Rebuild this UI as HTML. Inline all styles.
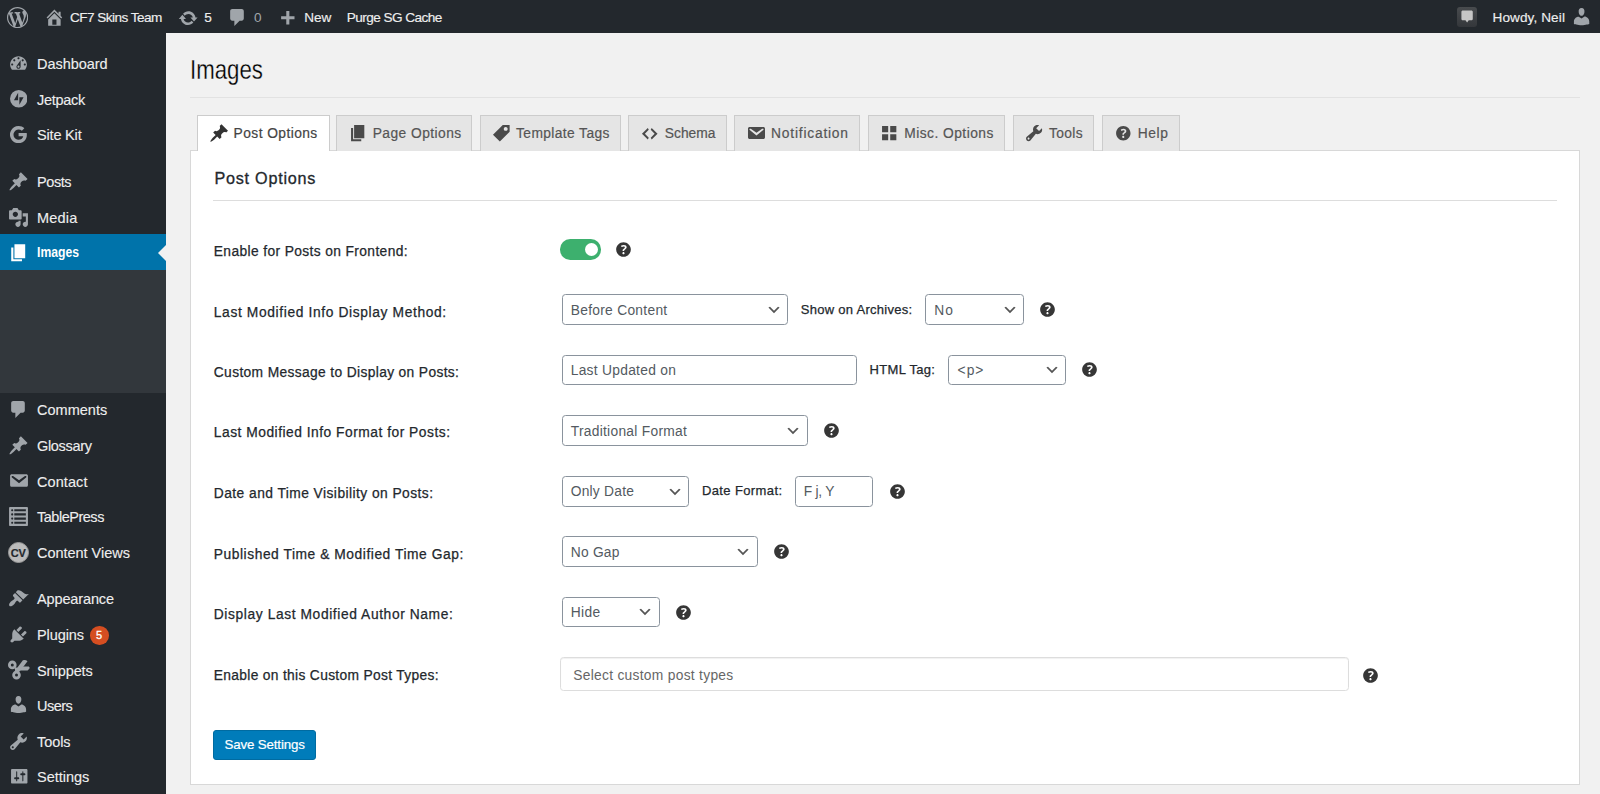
<!DOCTYPE html>
<html lang="en"><head><meta charset="utf-8"><title>Images</title>
<style>
*{box-sizing:border-box;margin:0;padding:0}
html,body{width:1600px;height:794px;overflow:hidden;background:#f1f1f1;font-family:"Liberation Sans",sans-serif;color:#23282d}
.t{position:absolute;white-space:pre;display:block}
.i{position:absolute;display:block}
.b{position:absolute;display:block}
#bar{position:absolute;left:0;top:0;width:1600px;height:33px;background:#23282d}
#side{position:absolute;left:0;top:33px;width:166px;height:761px;background:#23282d}
.tab{position:absolute;top:115px;height:36px;background:#e5e5e5;border:1px solid #ccc;border-bottom:none}
.tab.on{background:#fff;height:36px;border-color:#ccc}
.sel,.inp{position:absolute;background:#fff;border:1px solid #8a939d;border-radius:3.5px}
</style></head><body>
<div id="bar"></div>
<svg class="i" style="left:7.20px;top:6.80px" width="21.2" height="21.20" viewBox="0 0 20 20" fill="#a0a5aa" ><path d="M20 10c0-5.51-4.49-10-10-10C4.48 0 0 4.49 0 10c0 5.52 4.48 10 10 10 5.51 0 10-4.48 10-10zM7.78 15.37L4.37 6.22c.55-.02 1.17-.08 1.17-.08.5-.06.44-1.13-.06-1.11 0 0-1.45.11-2.37.11-.18 0-.37 0-.58-.01C4.12 2.69 6.87 1.11 10 1.11c2.33 0 4.45.87 6.05 2.34-.68-.11-1.65.39-1.65 1.58 0 .74.45 1.36.9 2.1.35.61.55 1.36.55 2.46 0 1.49-1.4 5-1.4 5l-3.03-8.37c.54-.02.82-.17.82-.17.5-.05.44-1.25-.06-1.22 0 0-1.44.12-2.38.12-.87 0-2.33-.12-2.33-.12-.5-.03-.56 1.2-.06 1.22l.92.08 1.26 3.41zM17.41 10c.24-.64.74-1.87.43-4.25.7 1.29 1.05 2.71 1.05 4.25 0 3.29-1.73 6.24-4.4 7.78.97-2.59 1.94-5.2 2.92-7.78zM6.1 18.09C3.12 16.65 1.11 13.53 1.11 10c0-1.3.23-2.48.72-3.59C3.25 10.3 4.67 14.2 6.1 18.09zm4.03-6.63l2.58 6.98c-.86.29-1.76.45-2.71.45-.79 0-1.57-.11-2.29-.33.81-2.38 1.62-4.74 2.42-7.1z"/></svg>
<svg class="i" style="left:43.50px;top:6.79px" width="20.8" height="20.80" viewBox="0 0 20 20" fill="#a0a5aa" ><path d="M16 8.5l1.53 1.53-1.06 1.06L10 4.62l-6.47 6.47-1.06-1.06L10 2.5l4 4v-2h2v4zm-6-2.46l6 5.99V18H4v-5.97zM12 17v-5H8v5h4z"/></svg>
<span class="t" style="left:69.90px;top:8px;font-size:13.6px;line-height:20px;color:#eee;letter-spacing:-0.542px;-webkit-text-stroke:0.15px #eee;">CF7 Skins Team</span>
<svg class="i" style="left:177.50px;top:7.60px" width="20.4" height="20.40" viewBox="0 0 20 20" fill="#a0a5aa" ><path d="M10.2 3.28c3.53 0 6.43 2.61 6.92 6h2.08l-3.5 4-3.5-4h2.32c-.45-1.97-2.21-3.45-4.32-3.45-1.45 0-2.73.71-3.54 1.78L4.95 5.66C6.23 4.2 8.11 3.28 10.2 3.28zm-.4 13.44c-3.52 0-6.43-2.61-6.92-6H.8l3.5-4c1.17 1.33 2.33 2.67 3.5 4H5.48c.45 1.97 2.21 3.45 4.32 3.45 1.45 0 2.73-.71 3.54-1.78l1.71 1.95c-1.28 1.46-3.15 2.38-5.25 2.38z"/></svg>
<span class="t" style="left:204.30px;top:8px;font-size:13.6px;line-height:20px;color:#eee;letter-spacing:-0.062px;-webkit-text-stroke:0.15px #eee;">5</span>
<svg class="i" style="left:227.12px;top:7.30px" width="21" height="21.00" viewBox="0 0 20 20" fill="#a0a5aa" ><path d="M5 2h9c1.1 0 2 .9 2 2v7c0 1.1-.9 2-2 2h-2l-5 5v-5H5c-1.1 0-2-.9-2-2V4c0-1.1.9-2 2-2z"/></svg>
<span class="t" style="left:254.00px;top:8px;font-size:13.6px;line-height:20px;color:#a0a5aa;letter-spacing:0.338px;">0</span>
<svg class="i" style="left:277.24px;top:8.64px" width="20.6" height="20.60" viewBox="0 0 20 20" fill="#a0a5aa" ><path d="M17 7v3h-5v5H9v-5H4V7h5V2h3v5h5z"/></svg>
<span class="t" style="left:304.30px;top:8px;font-size:13.6px;line-height:20px;color:#eee;letter-spacing:-0.101px;-webkit-text-stroke:0.15px #eee;">New</span>
<span class="t" style="left:346.70px;top:8px;font-size:13.6px;line-height:20px;color:#eee;letter-spacing:-0.540px;-webkit-text-stroke:0.15px #eee;">Purge SG Cache</span>
<div class="b" style="left:1456.5px;top:7px;width:20.500px;height:20.200px;background:linear-gradient(#484b4e,#34373b);border-radius:3px"></div>
<svg class="i" style="left:1459.90px;top:8.65px" width="14.2" height="14.20" viewBox="0 0 20 20" fill="#c6c6c6" ><path d="M4 2h12c1.100 0 2 .9 2 2v10c0 1.100-.9 2-2 2h-3.700L10 19l-2.300-3H4c-1.100 0-2-.9-2-2V4c0-1.100.9-2 2-2z"/></svg>
<span class="t" style="left:1492.50px;top:8px;font-size:13.6px;line-height:20px;color:#eee;letter-spacing:0.089px;-webkit-text-stroke:0.15px #eee;">Howdy, Neil</span>
<svg class="i" style="left:1571.05px;top:6.47px" width="21.2" height="21.20" viewBox="0 0 20 20" fill="#a0a5aa" ><path d="M10 9.25c-2.27 0-2.73-3.44-2.73-3.44C7 4.02 7.82 2 9.97 2c2.16 0 2.98 2.02 2.71 3.81 0 0-.41 3.44-2.68 3.44zm0 2.57L12.720 10c2.39 0 4.52 2.33 4.52 4.53v2.49s-3.65 1.13-7.24 1.13c-3.65 0-7.24-1.13-7.24-1.13v-2.49c0-2.25 1.94-4.48 4.47-4.48z"/></svg>
<div id="side"></div>
<div class="b" style="left:0;top:270px;width:166px;height:123px;background:#32373c"></div>
<div class="b" style="left:0;top:234px;width:166px;height:36px;background:#0073aa"></div>
<div class="b" style="left:158px;top:244.500px;width:0;height:0;border:8px solid transparent;border-right-color:#f1f1f1;border-left-width:0"></div>
<span class="t" style="left:37.00px;top:54px;font-size:14.5px;line-height:20px;color:#eee;letter-spacing:-0.049px;-webkit-text-stroke:0.12px #eee;">Dashboard</span>
<svg class="i" style="left:8.15px;top:52.77px" width="21" height="21.00" viewBox="0 0 20 20" fill="#a0a5aa" ><path d="M3.76 16h12.480c1.1-1.37 1.76-3.11 1.76-5 0-4.42-3.58-8-8-8s-8 3.58-8 8c0 1.89.66 3.63 1.76 5zM10 4c.55 0 1 .45 1 1s-.45 1-1 1-1-.45-1-1 .45-1 1-1zM6 6c.55 0 1 .45 1 1s-.45 1-1 1-1-.45-1-1 .45-1 1-1zm8 0c.55 0 1 .45 1 1s-.45 1-1 1-1-.45-1-1 .45-1 1-1zm-5.370 5.550L12 7v6c0 1.1-.9 2-2 2s-2-.9-2-2c0-.57.24-1.08.63-1.45zM4 10c.55 0 1 .45 1 1s-.45 1-1 1-1-.45-1-1 .45-1 1-1zm12 0c.55 0 1 .45 1 1s-.45 1-1 1-1-.45-1-1 .45-1 1-1zm-5 3c0-.55-.45-1-1-1s-1 .45-1 1 .45 1 1 1 1-.45 1-1z"/></svg>
<span class="t" style="left:37.00px;top:90px;font-size:14.5px;line-height:20px;color:#eee;letter-spacing:-0.283px;-webkit-text-stroke:0.12px #eee;">Jetpack</span>
<span class="t" style="left:37.00px;top:125px;font-size:14.5px;line-height:20px;color:#eee;letter-spacing:-0.180px;-webkit-text-stroke:0.12px #eee;">Site Kit</span>
<span class="t" style="left:37.00px;top:172px;font-size:14.5px;line-height:20px;color:#eee;letter-spacing:-0.413px;-webkit-text-stroke:0.12px #eee;">Posts</span>
<svg class="i" style="left:8.20px;top:170.79px" width="21" height="21.00" viewBox="0 0 20 20" fill="#a0a5aa" ><path d="M10.44 3.02l1.82-1.82 6.36 6.35-1.83 1.82c-1.05-.68-2.48-.57-3.41.36l-.75.75c-.92.93-1.04 2.35-.35 3.41l-1.83 1.82-2.41-2.41-2.8 2.79c-.42.42-3.38 2.71-3.8 2.29s1.86-3.39 2.28-3.81l2.79-2.79L4.1 9.36l1.830-1.820c1.05.69 2.48.57 3.4-.36l.75-.75c.93-.92 1.05-2.35.36-3.41z"/></svg>
<span class="t" style="left:37.00px;top:208px;font-size:14.5px;line-height:20px;color:#eee;letter-spacing:0.200px;-webkit-text-stroke:0.12px #eee;">Media</span>
<svg class="i" style="left:8.25px;top:206.80px" width="21" height="21.00" viewBox="0 0 20 20" fill="#a0a5aa" ><path d="M13 11V4c0-.55-.45-1-1-1h-1.670L9 1H5L3.670 3H2c-.55 0-1 .45-1 1v7c0 .55.45 1 1 1h10c.55 0 1-.45 1-1zM7 4.500c1.38 0 2.5 1.12 2.5 2.5S8.380 9.500 7 9.500 4.500 8.380 4.500 7 5.620 4.500 7 4.500zM14 6h5v10.500c0 1.38-1.12 2.5-2.5 2.5S14 17.880 14 16.500s1.120-2.500 2.500-2.500c.17 0 .34.02.5.05V9h-3V6zm-4 8.050V13h2v3.500c0 1.38-1.12 2.5-2.500 2.500S7 17.880 7 16.500 8.120 14 9.500 14c.17 0 .34.02.5.05z"/></svg>
<span class="t" style="left:37.00px;top:400px;font-size:14.5px;line-height:20px;color:#eee;letter-spacing:0.011px;-webkit-text-stroke:0.12px #eee;">Comments</span>
<svg class="i" style="left:8.17px;top:398.80px" width="21" height="21.00" viewBox="0 0 20 20" fill="#a0a5aa" ><path d="M5 2h9c1.1 0 2 .9 2 2v7c0 1.1-.9 2-2 2h-2l-5 5v-5H5c-1.1 0-2-.9-2-2V4c0-1.1.9-2 2-2z"/></svg>
<span class="t" style="left:37.00px;top:436px;font-size:14.5px;line-height:20px;color:#eee;letter-spacing:-0.315px;-webkit-text-stroke:0.12px #eee;">Glossary</span>
<svg class="i" style="left:8.20px;top:435.49px" width="21" height="21.00" viewBox="0 0 20 20" fill="#a0a5aa" ><path d="M10.44 3.02l1.82-1.82 6.36 6.35-1.83 1.82c-1.05-.68-2.48-.57-3.41.36l-.75.75c-.92.93-1.04 2.35-.35 3.41l-1.83 1.82-2.41-2.41-2.8 2.79c-.42.42-3.38 2.71-3.8 2.29s1.86-3.39 2.28-3.81l2.79-2.79L4.1 9.36l1.830-1.820c1.05.69 2.48.57 3.4-.36l.75-.75c.93-.92 1.05-2.35.36-3.41z"/></svg>
<span class="t" style="left:37.00px;top:472px;font-size:14.5px;line-height:20px;color:#eee;letter-spacing:0.074px;-webkit-text-stroke:0.12px #eee;">Contact</span>
<svg class="i" style="left:8.03px;top:469.95px" width="21" height="21.00" viewBox="0 0 20 20" fill="#a0a5aa" ><path d="M3.870 4h13.250C18.370 4 19 4.590 19 5.790v8.420c0 1.190-.63 1.790-1.880 1.790H3.870c-1.250 0-1.880-.6-1.880-1.790V5.790c0-1.200.63-1.790 1.880-1.790zm6.620 8.600l6.740-5.530c.24-.2.43-.66.130-1.070-.29-.41-.82-.42-1.170-.17l-5.700 3.860L4.800 5.830c-.35-.25-.88-.24-1.170.17-.3.41-.11.87.13 1.070z"/></svg>
<span class="t" style="left:37.00px;top:507px;font-size:14.5px;line-height:20px;color:#eee;letter-spacing:-0.483px;-webkit-text-stroke:0.12px #eee;">TablePress</span>
<svg class="i" style="left:8.10px;top:505.90px" width="21" height="21.00" viewBox="0 0 20 20" fill="#a0a5aa" ><path d="M2 19h16c.55 0 1-.45 1-1V2c0-.55-.45-1-1-1H2c-.55 0-1 .45-1 1v16c0 .55.45 1 1 1zM4 3c.55 0 1 .45 1 1s-.45 1-1 1-1-.45-1-1 .45-1 1-1zm13 0v2H6V3h11zM4 7c.55 0 1 .45 1 1s-.45 1-1 1-1-.45-1-1 .45-1 1-1zm13 0v2H6V7h11zM4 11c.55 0 1 .45 1 1s-.45 1-1 1-1-.45-1-1 .45-1 1-1zm13 0v2H6v-2h11zM4 15c.55 0 1 .45 1 1s-.45 1-1 1-1-.45-1-1 .45-1 1-1zm13 0v2H6v-2h11z"/></svg>
<span class="t" style="left:37.00px;top:543px;font-size:14.5px;line-height:20px;color:#eee;letter-spacing:-0.026px;-webkit-text-stroke:0.12px #eee;">Content Views</span>
<span class="t" style="left:37.00px;top:589px;font-size:14.5px;line-height:20px;color:#eee;letter-spacing:-0.130px;-webkit-text-stroke:0.12px #eee;">Appearance</span>
<svg class="i" style="left:7.84px;top:588.01px" width="21" height="21.00" viewBox="0 0 20 20" fill="#a0a5aa" ><path d="M14.480 11.060L7.410 3.990l1.500-1.500c.5-.56 2.300-.47 3.510.32 1.210.8 1.430 1.280 2.910 2.100 1.180.64 2.450 1.260 4.450.85zm-.71.71L6.700 4.700 4.930 6.470c-.39.39-.39 1.020 0 1.410l1.060 1.060c.39.39.39 1.030 0 1.420-.6.6-1.430 1.110-2.210 1.690-.35.26-.7.53-1.010.84C1.430 14.230.4 16.080 1.400 17.070c.99 1 2.840-.03 4.180-1.360.31-.31.58-.66.850-1.020.57-.78 1.080-1.610 1.690-2.210.39-.39 1.020-.39 1.410 0l1.060 1.060c.39.39 1.020.39 1.410 0z"/></svg>
<span class="t" style="left:37.00px;top:625px;font-size:14.5px;line-height:20px;color:#eee;letter-spacing:-0.095px;-webkit-text-stroke:0.12px #eee;">Plugins</span>
<svg class="i" style="left:8.00px;top:623.60px" width="21" height="21.00" viewBox="0 0 20 20" fill="#a0a5aa" ><path d="M13.110 4.360L9.870 7.600 8 5.730l3.240-3.240c.35-.34 1.050-.2 1.560.32.52.51.66 1.210.31 1.550zm-8 1.770l.91-1.120 9.010 9.010-1.190.84c-.71.71-2.630 1.160-3.820 1.160H6.140L4.900 17.260c-.59.59-1.540.59-2.120 0-.59-.58-.59-1.530 0-2.120l1.240-1.240v-3.880c0-1.130.4-3.190 1.090-3.890zm7.260 3.970l3.240-3.240c.34-.35 1.040-.21 1.550.31.52.51.66 1.210.31 1.550l-3.240 3.250z"/></svg>
<span class="t" style="left:37.00px;top:661px;font-size:14.5px;line-height:20px;color:#eee;letter-spacing:-0.092px;-webkit-text-stroke:0.12px #eee;">Snippets</span>
<span class="t" style="left:37.00px;top:696px;font-size:14.5px;line-height:20px;color:#eee;letter-spacing:-0.515px;-webkit-text-stroke:0.12px #eee;">Users</span>
<svg class="i" style="left:8.05px;top:694.42px" width="21" height="21.00" viewBox="0 0 20 20" fill="#a0a5aa" ><path d="M10 9.25c-2.27 0-2.73-3.44-2.73-3.44C7 4.02 7.82 2 9.97 2c2.16 0 2.98 2.02 2.71 3.81 0 0-.41 3.44-2.68 3.44zm0 2.57L12.720 10c2.39 0 4.52 2.33 4.52 4.53v2.49s-3.65 1.13-7.24 1.13c-3.65 0-7.24-1.13-7.24-1.13v-2.49c0-2.25 1.94-4.48 4.47-4.48z"/></svg>
<span class="t" style="left:37.00px;top:732px;font-size:14.5px;line-height:20px;color:#eee;letter-spacing:-0.072px;-webkit-text-stroke:0.12px #eee;">Tools</span>
<svg class="i" style="left:8.00px;top:730.73px" width="21" height="21.00" viewBox="0 0 20 20" fill="#a0a5aa" ><path d="M16.680 9.770c-1.340 1.340-3.300 1.670-4.950.99l-5.410 6.520c-.99.99-2.590.99-3.580 0s-.99-2.590 0-3.570l6.520-5.420c-.68-1.650-.35-3.610.99-4.950 1.280-1.280 3.120-1.620 4.720-1.060l-2.890 2.890 2.820 2.820 2.860-2.870c.53 1.580.18 3.390-1.080 4.650zM3.810 16.210c.4.39 1.040.39 1.430 0 .4-.4.4-1.040 0-1.430-.39-.4-1.030-.4-1.430 0-.39.39-.39 1.030 0 1.430z"/></svg>
<span class="t" style="left:37.00px;top:767px;font-size:14.5px;line-height:20px;color:#eee;letter-spacing:-0.013px;-webkit-text-stroke:0.12px #eee;">Settings</span>
<svg class="i" style="left:8.90px;top:765.80px" width="20.5" height="20.50" viewBox="0 0 20 20" fill="#a0a5aa" ><path d="M18 16V4c0-.55-.45-1-1-1H3c-.55 0-1 .45-1 1v12c0 .55.45 1 1 1h14c.55 0 1-.45 1-1zM8 11h1c.55 0 1 .45 1 1s-.45 1-1 1H8v1.500c0 .28-.22.5-.5.5s-.5-.22-.5-.5V13H6c-.55 0-1-.45-1-1s.45-1 1-1h1V5.500c0-.28.22-.5.5-.5s.5.220.5.500V11zm5-2h-1c-.55 0-1-.45-1-1s.45-1 1-1h1V5.500c0-.28.22-.5.5-.5s.5.220.5.500V7h1c.55 0 1 .45 1 1s-.45 1-1 1h-1v5.500c0 .28-.22.5-.5.5s-.5-.22-.5-.5V9z"/></svg>
<span class="t" style="left:37.00px;top:242px;font-size:14.5px;line-height:20px;color:#fff;font-weight:700;transform:scaleX(0.8403);transform-origin:0 0;">Images</span>
<svg class="i" style="left:8.09px;top:241.55px" width="21.5" height="21.50" viewBox="0 0 20 20" fill="#fff" ><path d="M6 15V2h10v13H6zm-1 1h8v2H3V5h2v11z"/></svg>
<svg class="i" style="left:9.95px;top:90.35px" width="17.5" height="17.50" viewBox="0 0 20 20" fill="#a0a5aa" ><path d="M10 0a10 10 0 100 20 10 10 0 000-20zM9.300 11.800H4.500l4.800-8.600zm1.400 5V8.200h4.800z"/></svg>
<svg class="i" style="left:10.18px;top:125.50px" width="17.2" height="17.20" viewBox="0 0 20 20" fill="#a0a5aa" ><path d="M19.600 10.230c0-.71-.06-1.390-.18-2.040H10v3.860h5.380a4.600 4.600 0 01-2 3.020v2.500h3.240c1.890-1.740 2.980-4.300 2.980-7.340zM10 20c2.700 0 4.960-.9 6.620-2.430l-3.240-2.500c-.9.6-2.040.96-3.380.96-2.600 0-4.800-1.760-5.600-4.120H1.060v2.590A10 10 0 0010 20zM4.400 11.910a6 6 0 010-3.820V5.500H1.060a10 10 0 000 9zM10 3.970c1.470 0 2.790.5 3.820 1.500l2.870-2.870C14.960.99 12.700 0 10 0A10 10 0 001.060 5.500L4.400 8.090C5.200 5.730 7.400 3.970 10 3.970z"/></svg>
<div class="b" style="left:8.100px;top:541.900px;width:21px;height:21px;border-radius:50%;background:#bbb;border:1px solid #9a9a9a"></div>
<span class="t" style="left:10.80px;top:543px;font-size:11px;line-height:20px;color:#23282d;font-weight:700;letter-spacing:-0.291px;-webkit-text-stroke:0.2px #23282d;">CV</span>
<svg class="i" style="left:0;top:650px" width="40" height="40" viewBox="0 0 40 40" fill="#a0a5aa"><g fill="none" stroke="#a0a5aa" stroke-width="2.800"><circle cx="12.300" cy="14.900" r="2.900"/><circle cx="16.500" cy="25.100" r="2.900"/></g><path d="M14.400 21.600L22.900 10.300Q25.400 9.300 27.500 11.300L24.300 15.500 19.500 21.600 17.300 22.700z"/><path d="M14.600 17.300L17.500 17.800 23.500 16.600H28.800Q30.100 17.400 29.500 18.600L27.600 20.400H19.300L17.600 22.400 15.200 21z"/></svg>
<div class="b" style="left:90px;top:626.200px;width:18.500px;height:18.500px;border-radius:50%;background:#d54e21"></div>
<span class="t" style="left:96.10px;top:625px;font-size:11px;line-height:20px;color:#fff;letter-spacing:0.875px;-webkit-text-stroke:0.3px #fff;">5</span>
<span class="t" style="left:189.70px;top:60px;font-size:27.9px;line-height:20px;color:#000;transform:scaleX(0.7970);transform-origin:0 0;-webkit-text-stroke:0.3px #f1f1f1;">Images</span>
<div class="b" style="left:190px;top:97px;width:1390px;height:1px;background:#e2e2e2"></div>
<div class="b" style="left:190px;top:150px;width:1390px;height:635px;background:#fff;border:1px solid #d8d8d8"></div>
<div class="tab on" style="left:197px;width:132.5px"></div>
<svg class="i" style="left:208.70px;top:123.29px" width="20.4" height="20.40" viewBox="0 0 20 20" fill="#333" ><path d="M10.44 3.02l1.82-1.82 6.36 6.35-1.83 1.82c-1.05-.68-2.48-.57-3.41.36l-.75.75c-.92.93-1.04 2.35-.35 3.41l-1.83 1.82-2.41-2.41-2.8 2.79c-.42.42-3.38 2.71-3.8 2.29s1.86-3.39 2.28-3.81l2.79-2.79L4.1 9.36l1.830-1.820c1.05.69 2.48.57 3.4-.36l.75-.75c.93-.92 1.05-2.35.36-3.41z"/></svg>
<span class="t" style="left:233.60px;top:124px;font-size:13.8px;line-height:20px;color:#444;letter-spacing:0.425px;-webkit-text-stroke:0.2px #444;">Post Options</span>
<div class="tab" style="left:336px;width:136.0px"></div>
<svg class="i" style="left:348.21px;top:123.10px" width="20.4" height="20.40" viewBox="0 0 20 20" fill="#4a4a4a" ><path d="M6 15V2h10v13H6zm-1 1h8v2H3V5h2v11z"/></svg>
<span class="t" style="left:372.70px;top:124px;font-size:13.8px;line-height:20px;color:#555;letter-spacing:0.449px;-webkit-text-stroke:0.2px #555;">Page Options</span>
<div class="tab" style="left:479.5px;width:141.5px"></div>
<svg class="i" style="left:491.89px;top:123.01px" width="19.6" height="19.60" viewBox="0 0 20 20" fill="#4a4a4a" ><path d="M11 2h7v7L8 19l-7-7zm3 6c1.100 0 2-.9 2-2s-.9-2-2-2-2 .9-2 2 .9 2 2 2z"/></svg>
<span class="t" style="left:516.10px;top:124px;font-size:13.8px;line-height:20px;color:#555;letter-spacing:0.383px;-webkit-text-stroke:0.2px #555;">Template Tags</span>
<div class="tab" style="left:628px;width:99.0px"></div>
<svg class="i" style="left:640.05px;top:123.55px" width="19.5" height="19.50" viewBox="0 0 20 20" fill="#4a4a4a" ><path d="M9 6l-4 4 4 4-1 2-6-6 6-6zm2 8l4-4-4-4 1-2 6 6-6 6z"/></svg>
<span class="t" style="left:664.80px;top:124px;font-size:13.8px;line-height:20px;color:#555;letter-spacing:0.013px;-webkit-text-stroke:0.2px #555;">Schema</span>
<div class="tab" style="left:734.3px;width:125.7px"></div>
<svg class="i" style="left:746.00px;top:123.30px" width="20" height="20.00" viewBox="0 0 20 20" fill="#4a4a4a" ><path d="M3.870 4h13.250C18.370 4 19 4.590 19 5.790v8.420c0 1.190-.63 1.790-1.880 1.790H3.870c-1.250 0-1.880-.6-1.880-1.790V5.790c0-1.200.63-1.790 1.880-1.790zm6.620 8.600l6.740-5.530c.24-.2.43-.66.130-1.070-.29-.41-.82-.42-1.170-.17l-5.700 3.860L4.800 5.830c-.35-.25-.88-.24-1.170.17-.3.41-.11.87.13 1.070z"/></svg>
<span class="t" style="left:771.10px;top:124px;font-size:13.8px;line-height:20px;color:#555;letter-spacing:0.786px;-webkit-text-stroke:0.2px #555;">Notification</span>
<div class="tab" style="left:867.5px;width:137.5px"></div>
<svg class="i" style="left:879.10px;top:123.10px" width="20.4" height="20.40" viewBox="0 0 20 20" fill="#4a4a4a" ><path d="M9 9V3H3v6h6zm8 0V3h-6v6h6zm-8 8v-6H3v6h6zm8 0v-6h-6v6h6z"/></svg>
<span class="t" style="left:904.30px;top:124px;font-size:13.8px;line-height:20px;color:#555;letter-spacing:0.456px;-webkit-text-stroke:0.2px #555;">Misc. Options</span>
<div class="tab" style="left:1013px;width:81.0px"></div>
<svg class="i" style="left:1024.10px;top:123.18px" width="20.2" height="20.20" viewBox="0 0 20 20" fill="#4a4a4a" ><path d="M16.680 9.770c-1.340 1.340-3.300 1.670-4.950.99l-5.410 6.520c-.99.99-2.590.99-3.580 0s-.99-2.590 0-3.570l6.520-5.420c-.68-1.650-.35-3.610.99-4.950 1.280-1.280 3.120-1.620 4.720-1.060l-2.890 2.890 2.820 2.820 2.860-2.870c.53 1.580.18 3.390-1.080 4.650zM3.810 16.210c.4.39 1.040.39 1.430 0 .4-.4.4-1.040 0-1.430-.39-.4-1.030-.4-1.430 0-.39.39-.39 1.030 0 1.430z"/></svg>
<span class="t" style="left:1049.10px;top:124px;font-size:13.8px;line-height:20px;color:#555;letter-spacing:0.336px;-webkit-text-stroke:0.2px #555;">Tools</span>
<div class="tab" style="left:1101.8px;width:78.5px"></div>
<svg class="i" style="left:1112.70px;top:123.00px" width="20.6" height="20.60" viewBox="0 0 20 20" fill="#4a4a4a" ><path d="M17 10c0-3.870-3.140-7-7-7-3.870 0-7 3.130-7 7s3.130 7 7 7c3.860 0 7-3.130 7-7zm-6.300 1.480H9.140v-.43c0-.38.080-.7.240-.98s.46-.57.880-.89c.41-.29.680-.53.810-.71.14-.18.2-.39.2-.62 0-.25-.09-.44-.28-.58-.19-.13-.45-.19-.79-.19-.58 0-1.250.19-2 .57l-.64-1.280c.87-.49 1.800-.74 2.770-.74.810 0 1.450.2 1.920.58.480.39.710.91.710 1.550 0 .43-.09.8-.29 1.110-.19.32-.57.67-1.110 1.060-.38.28-.61.49-.71.630-.1.15-.15.340-.15.570v.35zm-1.470 2.740c-.18-.17-.27-.42-.27-.73 0-.33.080-.58.260-.75s.43-.25.770-.25c.32 0 .57.090.75.260s.27.420.27.740c0 .3-.09.55-.27.72-.18.180-.43.270-.75.270-.33 0-.58-.09-.76-.26z"/></svg>
<span class="t" style="left:1137.80px;top:124px;font-size:13.8px;line-height:20px;color:#555;letter-spacing:0.577px;-webkit-text-stroke:0.2px #555;">Help</span>
<span class="t" style="left:214.40px;top:168px;font-size:16.2px;line-height:20px;color:#23282d;letter-spacing:0.759px;-webkit-text-stroke:0.3px #23282d;">Post Options</span>
<div class="b" style="left:213px;top:200px;width:1344px;height:1px;background:#ddd"></div>
<span class="t" style="left:213.80px;top:242px;font-size:13.8px;line-height:20px;color:#23282d;letter-spacing:0.375px;-webkit-text-stroke:0.25px #23282d;">Enable for Posts on Frontend:</span>
<span class="t" style="left:213.80px;top:303px;font-size:13.8px;line-height:20px;color:#23282d;letter-spacing:0.627px;-webkit-text-stroke:0.25px #23282d;">Last Modified Info Display Method:</span>
<span class="t" style="left:213.80px;top:363px;font-size:13.8px;line-height:20px;color:#23282d;letter-spacing:0.354px;-webkit-text-stroke:0.25px #23282d;">Custom Message to Display on Posts:</span>
<span class="t" style="left:213.80px;top:423px;font-size:13.8px;line-height:20px;color:#23282d;letter-spacing:0.504px;-webkit-text-stroke:0.25px #23282d;">Last Modified Info Format for Posts:</span>
<span class="t" style="left:213.80px;top:484px;font-size:13.8px;line-height:20px;color:#23282d;letter-spacing:0.447px;-webkit-text-stroke:0.25px #23282d;">Date and Time Visibility on Posts:</span>
<span class="t" style="left:213.80px;top:545px;font-size:13.8px;line-height:20px;color:#23282d;letter-spacing:0.548px;-webkit-text-stroke:0.25px #23282d;">Published Time &amp; Modified Time Gap:</span>
<span class="t" style="left:213.80px;top:605px;font-size:13.8px;line-height:20px;color:#23282d;letter-spacing:0.596px;-webkit-text-stroke:0.25px #23282d;">Display Last Modified Author Name:</span>
<span class="t" style="left:213.80px;top:666px;font-size:13.8px;line-height:20px;color:#23282d;letter-spacing:0.319px;-webkit-text-stroke:0.25px #23282d;">Enable on this Custom Post Types:</span>
<div class="b" style="left:559.7px;top:239.4px;width:41.5px;height:20.3px;border-radius:10.2px;background:#3db06e"></div>
<div class="b" style="left:584.7px;top:242.8px;width:13.4px;height:13.4px;border-radius:50%;background:#fff"></div>
<svg class="i" style="left:613.30px;top:239.00px" width="21" height="21.00" viewBox="0 0 20 20" fill="#363636" ><path d="M17 10c0-3.870-3.140-7-7-7-3.870 0-7 3.130-7 7s3.130 7 7 7c3.860 0 7-3.130 7-7zm-6.300 1.480H9.140v-.43c0-.38.080-.7.240-.98s.46-.57.880-.89c.41-.29.680-.53.810-.71.14-.18.2-.39.2-.62 0-.25-.09-.44-.28-.58-.19-.13-.45-.19-.79-.19-.58 0-1.250.19-2 .57l-.64-1.280c.87-.49 1.800-.74 2.770-.74.810 0 1.450.2 1.920.58.480.39.710.91.710 1.550 0 .43-.09.8-.29 1.110-.19.32-.57.67-1.110 1.060-.38.28-.61.49-.71.630-.1.15-.15.340-.15.570v.35zm-1.470 2.740c-.18-.17-.27-.42-.27-.73 0-.33.080-.58.260-.75s.43-.25.770-.25c.32 0 .57.090.75.260s.27.420.27.740c0 .3-.09.55-.27.72-.18.180-.43.270-.75.270-.33 0-.58-.09-.76-.26z"/></svg>
<div class="sel" style="left:562px;top:294.4px;width:226.0px;height:30.5px"></div>
<span class="t" style="left:570.70px;top:301px;font-size:13.8px;line-height:20px;color:#535a61;letter-spacing:0.285px;">Before Content</span>
<svg class="i" style="left:766.0px;top:301.9px" width="16" height="16" viewBox="0 0 20 20" fill="#555" ><path d="M5 6l5 5 5-5 2 1-7 7-7-7z"/></svg>
<span class="t" style="left:800.80px;top:300px;font-size:13px;line-height:20px;color:#23282d;letter-spacing:0.279px;-webkit-text-stroke:0.25px #23282d;">Show on Archives:</span>
<div class="sel" style="left:925px;top:294.4px;width:98.7px;height:30.5px"></div>
<span class="t" style="left:934.30px;top:301px;font-size:13.8px;line-height:20px;color:#535a61;letter-spacing:1.080px;">No</span>
<svg class="i" style="left:1001.5px;top:301.9px" width="16" height="16" viewBox="0 0 20 20" fill="#555" ><path d="M5 6l5 5 5-5 2 1-7 7-7-7z"/></svg>
<svg class="i" style="left:1036.80px;top:298.50px" width="21" height="21.00" viewBox="0 0 20 20" fill="#363636" ><path d="M17 10c0-3.870-3.140-7-7-7-3.870 0-7 3.130-7 7s3.130 7 7 7c3.860 0 7-3.130 7-7zm-6.300 1.480H9.140v-.43c0-.38.080-.7.240-.98s.46-.57.880-.89c.41-.29.680-.53.810-.71.14-.18.2-.39.2-.62 0-.25-.09-.44-.28-.58-.19-.13-.45-.19-.79-.19-.58 0-1.250.19-2 .57l-.64-1.280c.87-.49 1.800-.74 2.770-.74.810 0 1.450.2 1.920.58.480.39.710.91.710 1.550 0 .43-.09.8-.29 1.110-.19.32-.57.67-1.110 1.060-.38.28-.61.49-.71.630-.1.15-.15.340-.15.570v.35zm-1.470 2.740c-.18-.17-.27-.42-.27-.73 0-.33.080-.58.260-.75s.43-.25.770-.25c.32 0 .57.090.75.260s.27.420.27.740c0 .3-.09.55-.27.72-.18.180-.43.270-.75.270-.33 0-.58-.09-.76-.26z"/></svg>
<div class="inp" style="left:562px;top:354.9px;width:295px;height:30.5px"></div>
<span class="t" style="left:570.70px;top:361px;font-size:13.8px;line-height:20px;color:#535a61;letter-spacing:0.282px;">Last Updated on</span>
<span class="t" style="left:869.50px;top:360px;font-size:13px;line-height:20px;color:#23282d;letter-spacing:0.327px;-webkit-text-stroke:0.25px #23282d;">HTML Tag:</span>
<div class="sel" style="left:948px;top:354.9px;width:117.8px;height:30.5px"></div>
<span class="t" style="left:957.50px;top:361px;font-size:13.8px;line-height:20px;color:#535a61;letter-spacing:1.068px;">&lt;p&gt;</span>
<svg class="i" style="left:1043.5px;top:362.4px" width="16" height="16" viewBox="0 0 20 20" fill="#555" ><path d="M5 6l5 5 5-5 2 1-7 7-7-7z"/></svg>
<svg class="i" style="left:1078.80px;top:359.00px" width="21" height="21.00" viewBox="0 0 20 20" fill="#363636" ><path d="M17 10c0-3.870-3.140-7-7-7-3.870 0-7 3.130-7 7s3.130 7 7 7c3.860 0 7-3.130 7-7zm-6.300 1.480H9.140v-.43c0-.38.080-.7.240-.98s.46-.57.880-.89c.41-.29.680-.53.810-.71.14-.18.2-.39.2-.62 0-.25-.09-.44-.28-.58-.19-.13-.45-.19-.79-.19-.58 0-1.250.19-2 .57l-.64-1.280c.87-.49 1.800-.74 2.770-.74.810 0 1.450.2 1.920.58.480.39.710.91.710 1.550 0 .43-.09.8-.29 1.110-.19.32-.57.67-1.110 1.060-.38.28-.61.49-.71.630-.1.15-.15.340-.15.570v.35zm-1.470 2.740c-.18-.17-.27-.42-.27-.73 0-.33.080-.58.260-.75s.43-.25.770-.25c.32 0 .57.090.75.260s.27.420.27.740c0 .3-.09.55-.27.72-.18.180-.43.270-.75.270-.33 0-.58-.09-.76-.26z"/></svg>
<div class="sel" style="left:562px;top:415.3px;width:245.8px;height:30.5px"></div>
<span class="t" style="left:570.70px;top:422px;font-size:13.8px;line-height:20px;color:#535a61;letter-spacing:0.276px;">Traditional Format</span>
<svg class="i" style="left:784.8px;top:422.8px" width="16" height="16" viewBox="0 0 20 20" fill="#555" ><path d="M5 6l5 5 5-5 2 1-7 7-7-7z"/></svg>
<svg class="i" style="left:820.50px;top:419.80px" width="21" height="21.00" viewBox="0 0 20 20" fill="#363636" ><path d="M17 10c0-3.870-3.140-7-7-7-3.870 0-7 3.130-7 7s3.130 7 7 7c3.860 0 7-3.130 7-7zm-6.300 1.480H9.140v-.43c0-.38.080-.7.240-.98s.46-.57.880-.89c.41-.29.680-.53.810-.71.14-.18.2-.39.2-.62 0-.25-.09-.44-.28-.58-.19-.13-.45-.19-.79-.19-.58 0-1.250.19-2 .57l-.64-1.280c.87-.49 1.800-.74 2.770-.74.810 0 1.450.2 1.920.58.480.39.710.91.710 1.550 0 .43-.09.8-.29 1.110-.19.32-.57.67-1.110 1.060-.38.28-.61.49-.71.630-.1.15-.15.340-.15.570v.35zm-1.470 2.740c-.18-.17-.27-.42-.27-.73 0-.33.080-.58.260-.75s.43-.25.770-.25c.32 0 .57.090.75.260s.27.420.27.740c0 .3-.09.55-.27.72-.18.180-.43.270-.75.270-.33 0-.58-.09-.76-.26z"/></svg>
<div class="sel" style="left:562px;top:476px;width:127.0px;height:30.5px"></div>
<span class="t" style="left:570.70px;top:482px;font-size:13.8px;line-height:20px;color:#535a61;letter-spacing:0.238px;">Only Date</span>
<svg class="i" style="left:666.6999999999999px;top:483.5px" width="16" height="16" viewBox="0 0 20 20" fill="#555" ><path d="M5 6l5 5 5-5 2 1-7 7-7-7z"/></svg>
<span class="t" style="left:701.90px;top:481px;font-size:13px;line-height:20px;color:#23282d;letter-spacing:0.387px;-webkit-text-stroke:0.25px #23282d;">Date Format:</span>
<div class="inp" style="left:795px;top:476px;width:77.7px;height:30.5px"></div>
<span class="t" style="left:803.80px;top:482px;font-size:13.8px;line-height:20px;color:#535a61;letter-spacing:-0.276px;">F j, Y</span>
<svg class="i" style="left:886.50px;top:480.50px" width="21" height="21.00" viewBox="0 0 20 20" fill="#363636" ><path d="M17 10c0-3.870-3.140-7-7-7-3.870 0-7 3.130-7 7s3.130 7 7 7c3.860 0 7-3.130 7-7zm-6.300 1.480H9.140v-.43c0-.38.080-.7.240-.98s.46-.57.880-.89c.41-.29.680-.53.810-.71.14-.18.2-.39.2-.62 0-.25-.09-.44-.28-.58-.19-.13-.45-.19-.79-.19-.58 0-1.250.19-2 .57l-.64-1.280c.87-.49 1.800-.74 2.770-.74.810 0 1.450.2 1.920.58.480.39.710.91.710 1.550 0 .43-.09.8-.29 1.110-.19.32-.57.67-1.110 1.060-.38.28-.61.49-.71.630-.1.15-.15.340-.15.570v.35zm-1.470 2.740c-.18-.17-.27-.42-.27-.73 0-.33.080-.58.260-.75s.43-.25.770-.25c.32 0 .57.090.75.260s.27.420.27.740c0 .3-.09.55-.27.72-.18.180-.43.270-.75.270-.33 0-.58-.09-.76-.26z"/></svg>
<div class="sel" style="left:562px;top:536.3px;width:196.0px;height:30.5px"></div>
<span class="t" style="left:570.70px;top:543px;font-size:13.8px;line-height:20px;color:#535a61;letter-spacing:0.240px;">No Gap</span>
<svg class="i" style="left:735.3px;top:543.8px" width="16" height="16" viewBox="0 0 20 20" fill="#555" ><path d="M5 6l5 5 5-5 2 1-7 7-7-7z"/></svg>
<svg class="i" style="left:771.20px;top:541.00px" width="21" height="21.00" viewBox="0 0 20 20" fill="#363636" ><path d="M17 10c0-3.870-3.140-7-7-7-3.870 0-7 3.130-7 7s3.130 7 7 7c3.860 0 7-3.130 7-7zm-6.300 1.480H9.140v-.43c0-.38.080-.7.240-.98s.46-.57.880-.89c.41-.29.680-.53.810-.71.14-.18.2-.39.2-.62 0-.25-.09-.44-.28-.58-.19-.13-.45-.19-.79-.19-.58 0-1.250.19-2 .57l-.64-1.280c.87-.49 1.800-.74 2.770-.74.810 0 1.450.2 1.920.58.480.39.710.91.710 1.550 0 .43-.09.8-.29 1.110-.19.32-.57.67-1.110 1.060-.38.28-.61.49-.71.630-.1.15-.15.340-.15.570v.35zm-1.470 2.740c-.18-.17-.27-.42-.27-.73 0-.33.080-.58.260-.75s.43-.25.770-.25c.32 0 .57.090.75.260s.27.420.27.740c0 .3-.09.55-.27.72-.18.180-.43.270-.75.270-.33 0-.58-.09-.76-.26z"/></svg>
<div class="sel" style="left:562px;top:596.8px;width:97.7px;height:30.5px"></div>
<span class="t" style="left:570.70px;top:603px;font-size:13.8px;line-height:20px;color:#535a61;letter-spacing:0.402px;">Hide</span>
<svg class="i" style="left:637.0px;top:604.3px" width="16" height="16" viewBox="0 0 20 20" fill="#555" ><path d="M5 6l5 5 5-5 2 1-7 7-7-7z"/></svg>
<svg class="i" style="left:672.70px;top:601.50px" width="21" height="21.00" viewBox="0 0 20 20" fill="#363636" ><path d="M17 10c0-3.870-3.140-7-7-7-3.870 0-7 3.130-7 7s3.130 7 7 7c3.860 0 7-3.130 7-7zm-6.300 1.480H9.140v-.43c0-.38.080-.7.240-.98s.46-.57.880-.89c.41-.29.680-.53.810-.71.14-.18.2-.39.2-.62 0-.25-.09-.44-.28-.58-.19-.13-.45-.19-.79-.19-.58 0-1.250.19-2 .57l-.64-1.280c.87-.49 1.800-.74 2.770-.74.810 0 1.450.2 1.920.58.480.39.710.91.710 1.550 0 .43-.09.8-.29 1.110-.19.32-.57.67-1.110 1.060-.38.28-.61.49-.71.630-.1.15-.15.340-.15.570v.35zm-1.470 2.740c-.18-.17-.27-.42-.27-.73 0-.33.080-.58.260-.75s.43-.25.770-.25c.32 0 .57.090.75.260s.27.420.27.740c0 .3-.09.55-.27.72-.18.180-.43.270-.75.270-.33 0-.58-.09-.76-.26z"/></svg>
<div class="inp" style="left:560px;top:657.4px;width:788.8px;height:34px;border-color:#ddd;box-shadow:inset 0 1px 1px rgba(0,0,0,.06)"></div>
<span class="t" style="left:573.20px;top:666px;font-size:13.8px;line-height:20px;color:#666;letter-spacing:0.289px;">Select custom post types</span>
<svg class="i" style="left:1360.30px;top:665.20px" width="21" height="21.00" viewBox="0 0 20 20" fill="#363636" ><path d="M17 10c0-3.870-3.140-7-7-7-3.870 0-7 3.130-7 7s3.130 7 7 7c3.860 0 7-3.130 7-7zm-6.300 1.480H9.140v-.43c0-.38.080-.7.240-.98s.46-.57.880-.89c.41-.29.680-.53.810-.71.14-.18.2-.39.2-.62 0-.25-.09-.44-.28-.58-.19-.13-.45-.19-.79-.19-.58 0-1.250.19-2 .57l-.64-1.280c.87-.49 1.800-.74 2.770-.74.810 0 1.450.2 1.920.58.480.39.710.91.710 1.550 0 .43-.09.8-.29 1.110-.19.32-.57.67-1.110 1.060-.38.28-.61.49-.71.630-.1.15-.15.340-.15.570v.35zm-1.470 2.740c-.18-.17-.27-.42-.27-.73 0-.33.080-.58.260-.75s.43-.25.770-.25c.32 0 .57.090.75.260s.27.420.27.740c0 .3-.09.55-.27.72-.18.180-.43.270-.75.270-.33 0-.58-.09-.76-.26z"/></svg>
<div class="b" style="left:213.2px;top:730px;width:102.9px;height:30px;background:#007cba;border:1px solid #006ba1;border-radius:3px"></div>
<span class="t" style="left:224.50px;top:735px;font-size:13.3px;line-height:20px;color:#fff;letter-spacing:-0.136px;-webkit-text-stroke:0.2px #fff;">Save Settings</span>
</body></html>
